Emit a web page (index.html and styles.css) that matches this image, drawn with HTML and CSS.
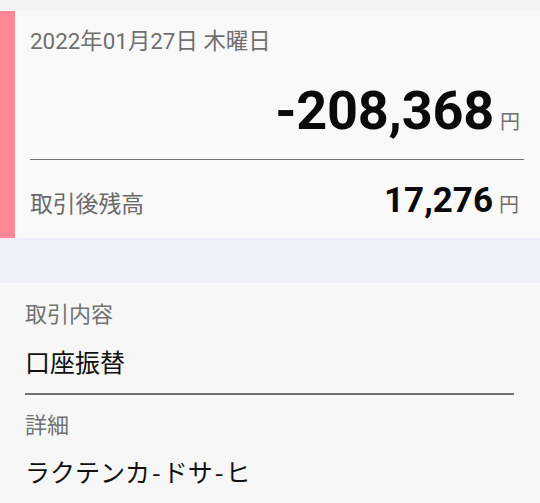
FILE: index.html
```html
<!DOCTYPE html>
<html lang="ja">
<head>
<meta charset="utf-8">
<title>取引明細</title>
<link rel="stylesheet" href="styles.css">
</head>
<body>
<div class="page">
  <section class="card">
    <div class="accent"></div>
    <div class="card-body">
      <div class="date">2022年01月27日 木曜日</div>
      <div class="amount-row">
        <span class="amount">-208,368</span><span class="yen">円</span>
      </div>
      <div class="divider"></div>
      <div class="balance-row">
        <span class="balance-label">取引後残高</span>
        <span class="balance-value"><span class="balance-num">17,276</span><span class="yen">円</span></span>
      </div>
    </div>
  </section>
  <div class="band"></div>
  <section class="details">
    <div class="label">取引内容</div>
    <div class="value">口座振替</div>
    <div class="divider thick"></div>
    <div class="label gap">詳細</div>
    <div class="value">ラクテンカ<span class="hy">-</span>ドサ<span class="hy">-</span>ヒ</div>
  </section>
</div>
</body>
</html>
```
FILE: styles.css
```css
* { box-sizing: border-box; }
html, body {
  margin: 0;
  padding: 0;
  background: #f4f4f4;
  font-family: "Roboto", "Noto Sans CJK JP", sans-serif;
}
.page {
  padding-top: 11px;
  width: 540px;
  height: 503px;
  overflow: hidden;
}
.card {
  display: flex;
  height: 227px;
  background: #f9f9f9;
}
.accent {
  width: 15px;
  flex: none;
  background: #fe8995;
}
.card-body {
  flex: 1;
  padding: 16px 16px 0 15px;
}
.date {
  font-size: 22.4px;
  line-height: 28px;
  color: #6f6f6f;
  white-space: nowrap;
}
.amount-row {
  margin-top: 24px;
  height: 64px;
  display: flex;
  justify-content: flex-end;
  align-items: baseline;
  padding-right: 4px;
}
.amount {
  font-size: 54px;
  line-height: 64px;
  font-weight: 700;
  color: #0a0a0a;
  letter-spacing: -0.2px;
}
.yen {
  font-size: 20px;
  color: #6f6f6f;
  margin-left: 6px;
  font-family: "Noto Sans CJK JP", sans-serif;
}
.divider {
  margin-top: 16px;
  height: 1px;
  background: #747474;
}
.balance-row {
  margin-top: 21px;
  display: flex;
  justify-content: space-between;
  align-items: baseline;
  padding-right: 5px;
}
.balance-label {
  font-size: 22.8px;
  color: #6a6a6a;
  font-family: "Noto Sans CJK JP", sans-serif;
}
.balance-value {
  display: flex;
  align-items: baseline;
}
.balance-num {
  font-size: 35px;
  line-height: 40px;
  font-weight: 700;
  color: #0a0a0a;
}
.band {
  height: 45px;
  background: #eeeff8;
}
.details {
  background: #f7f7f7;
  padding: 15px 26px 40px 25px;
  height: 220px;
}
.label {
  font-size: 22px;
  line-height: 28px;
  color: #727272;
  font-family: "Noto Sans CJK JP", sans-serif;
}
.label.gap {
  margin-top: 14px;
}
.value {
  margin-top: 18px;
  font-size: 25px;
  line-height: 34px;
  color: #111;
  font-family: "Noto Sans CJK JP", sans-serif;
}
.label.gap + .value {
  margin-top: 17px;
}
.hy {
  padding: 0 2px;
}
.divider.thick {
  margin-top: 15px;
  height: 2px;
  background: #6f6f6f;
}
```
